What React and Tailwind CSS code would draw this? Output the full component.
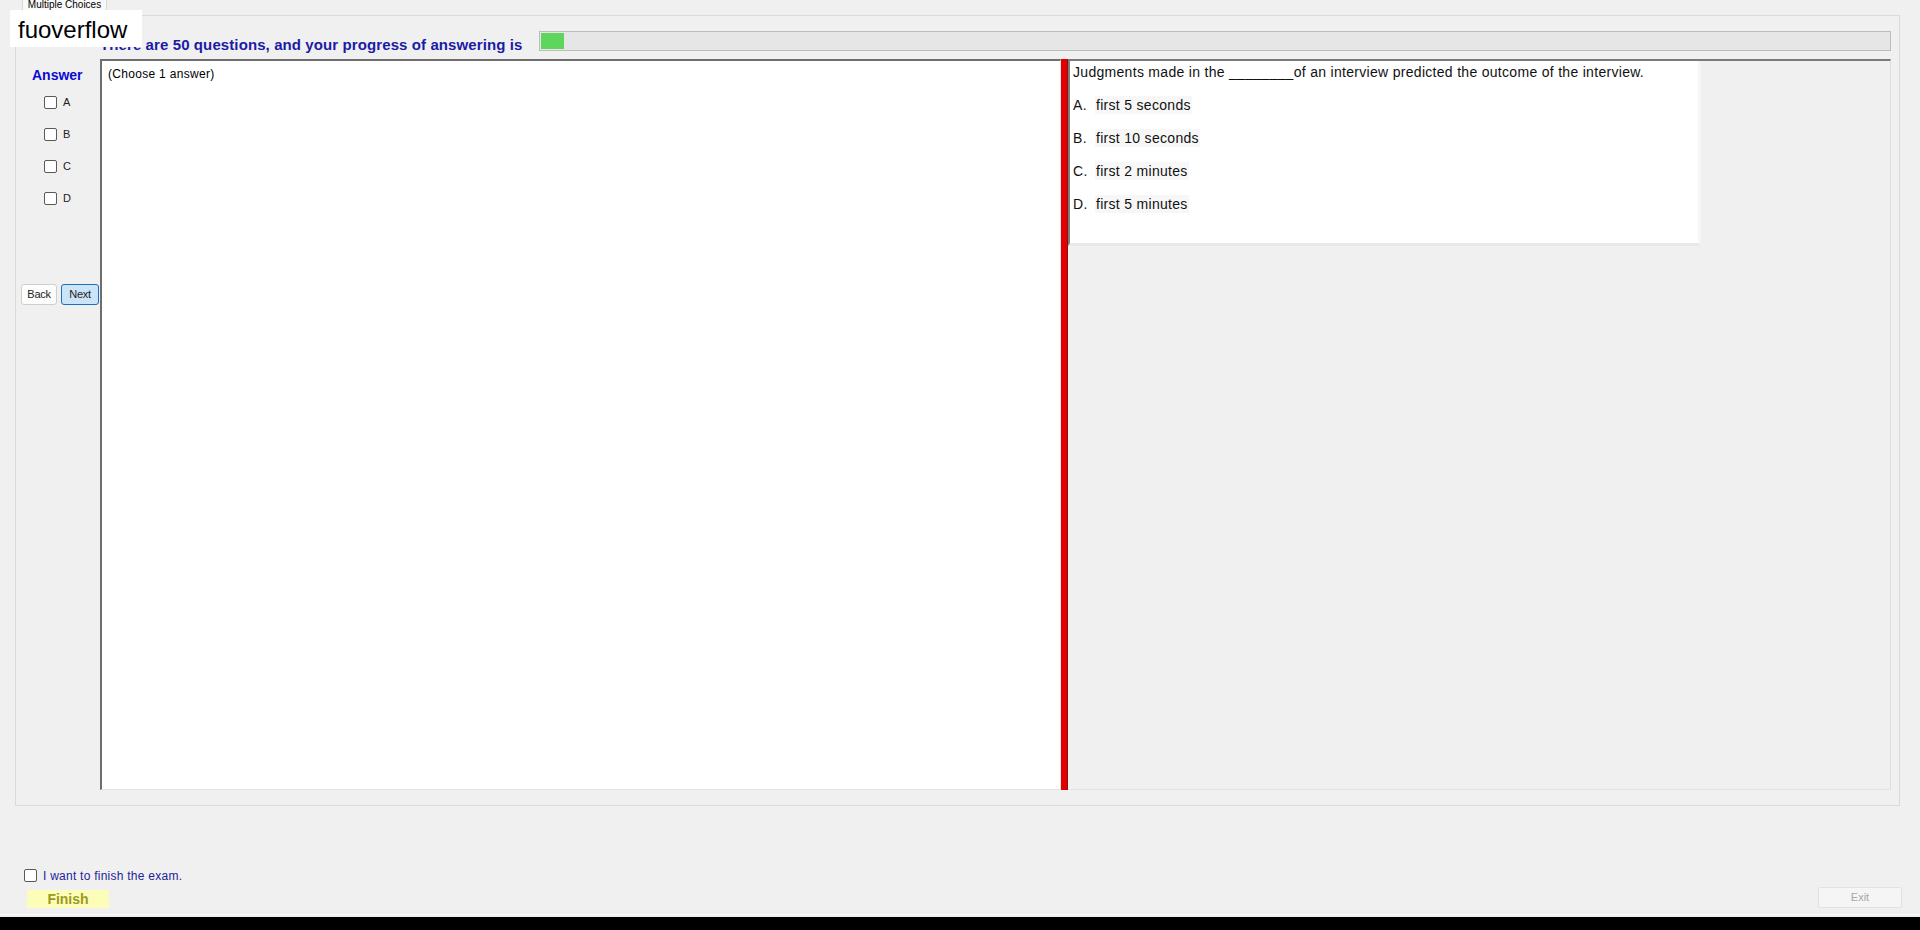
import React from 'react'

const choices = [
  { key: 'A', text: 'first 5 seconds' },
  { key: 'B', text: 'first 10 seconds' },
  { key: 'C', text: 'first 2 minutes' },
  { key: 'D', text: 'first 5 minutes' },
]

// plain win-forms style checkbox
const Box = () => (
  <span className="block w-[13px] h-[13px] bg-white border border-[#5a5a5a] rounded-[2px] shrink-0" />
)

const App = () => {
  return (
    <div className="relative w-[1920px] h-[930px] bg-[#f0f0f0] flex flex-col overflow-hidden font-['Liberation_Sans',Arial,sans-serif] text-black">
      {/* site badge over the window */}
      <div className="absolute left-[10px] top-[10px] w-[132px] h-[37px] bg-white pl-[8px] text-[24px] leading-[37px] pt-[1px]">
        fuoverflow
      </div>

      {/* tab strip */}
      <div className="h-[15px] pl-[22px] flex">
        <div className="h-[15px] w-[85px] border border-b-0 border-[#d9d9d9] bg-[#f9f9f9] text-[10px] leading-[11px] text-center -mt-[1px] overflow-hidden">
          <span className="block -mt-[1px]">Multiple Choices</span>
        </div>
      </div>

      {/* tab page */}
      <div className="ml-[15px] mr-[20px] h-[791px] border border-[#dadada] flex flex-col">
        {/* progress header */}
        <div className="h-[43px] flex items-start pt-[15px] pl-[84px] pr-[8px]">
          <div className="w-[439px] mt-[4px] text-[15px] leading-[20px] font-bold tracking-[0.1px] text-[#1b1ba6] whitespace-nowrap">
            There are 50 questions, and your progress of answering is
          </div>
          <div className="flex-1 h-[20px] border border-[#bcbcbc] bg-[#e6e6e6] p-px">
            <div className="w-[23px] h-full bg-[#5ed65e]" />
          </div>
        </div>

        {/* main row */}
        <div className="h-[731px] flex">
          {/* answer column */}
          <div className="w-[84px] flex flex-col">
            <div className="mt-[8px] pl-[16px] text-[14px] leading-[16px] font-bold text-[#0a0ad0]">Answer</div>
            <div className="mt-[3px] flex flex-col">
              {choices.map((c) => (
                <div key={c.key} className="h-[32px] flex items-center pl-[28px] gap-[6px]">
                  <Box />
                  <span className="text-[11px] leading-[13px] text-[#222]">{c.key}</span>
                </div>
              ))}
            </div>
            <div className="mt-[70px] pl-[5px] flex gap-[4px]">
              <button className="w-[36px] h-[21px] bg-[#fdfdfd] border border-[#cfcfcf] rounded-[3px] text-[11px] tracking-[-0.3px] text-[#222]">
                Back
              </button>
              <button className="w-[38px] h-[21px] bg-[#cce4f7] border border-[#1c6fb8] rounded-[3px] text-[11px] tracking-[-0.3px] text-[#222]">
                Next
              </button>
            </div>
          </div>

          {/* explanation text box */}
          <div className="w-[961px] bg-white border-l-2 border-t-2 border-[#6e6e6e] border-r border-b border-r-[#e8e8e8] border-b-[#e3e3e3] pl-[6px] pt-[6px]">
            <div className="text-[12px] leading-[14px] tracking-[0.3px]">(Choose 1 answer)</div>
          </div>

          {/* splitter */}
          <div className="w-[7px] bg-[#e10000] border-r border-[#8a1010]" />

          {/* question pane */}
          <div className="flex-1 mr-[8px] border-t-2 border-[#7a7a7a] border-b border-b-[#e3e3e3] border-r border-r-[#dcdcdc]">
            <div className="w-[633px] h-[185px] bg-white border-l-2 border-[#7d7d7d] border-r-[3px] border-r-[#f6f6f6] border-b-[3px] border-b-[#e8e8e8] pl-[3px] pt-[2px] text-[14px] leading-[18px] tracking-[0.3px] text-[#111]">
              <div className="h-[18px] whitespace-nowrap">
                Judgments made in the ________of an interview predicted the outcome of the interview.
              </div>
              {choices.map((c) => (
                <div key={c.key} className="mt-[15px] h-[18px] flex">
                  <span className="w-[23px]">{c.key}.</span>
                  <span className="bg-[#f7f7f7] px-px -ml-px">{c.text}</span>
                </div>
              ))}
            </div>
          </div>
        </div>
      </div>

      {/* finish controls */}
      <div className="flex-1 flex items-end justify-between pb-[6px] pl-[24px] pr-[18px]">
        <div className="flex flex-col">
          <div className="h-[15px] flex items-center gap-[6px]">
            <Box />
            <span className="text-[12px] leading-[14px] tracking-[0.25px] text-[#23239a]">I want to finish the exam.</span>
          </div>
          <button className="mt-[7px] ml-[3px] w-[82px] h-[18px] bg-[#fdfdba] text-[14px] leading-[18px] font-bold text-[#9a9a1e]">
            Finish
          </button>
        </div>
        <button className="w-[84px] h-[21px] bg-[#f5f5f5] border border-[#e2e2e2] rounded-[2px] text-[11px] text-[#a8a8a8]">
          Exit
        </button>
      </div>
      <div className="h-px bg-[#fbfbfb]" />
      <div className="h-[2px]" />
      <div className="h-[13px] bg-black" />
    </div>
  )
}

export default App
